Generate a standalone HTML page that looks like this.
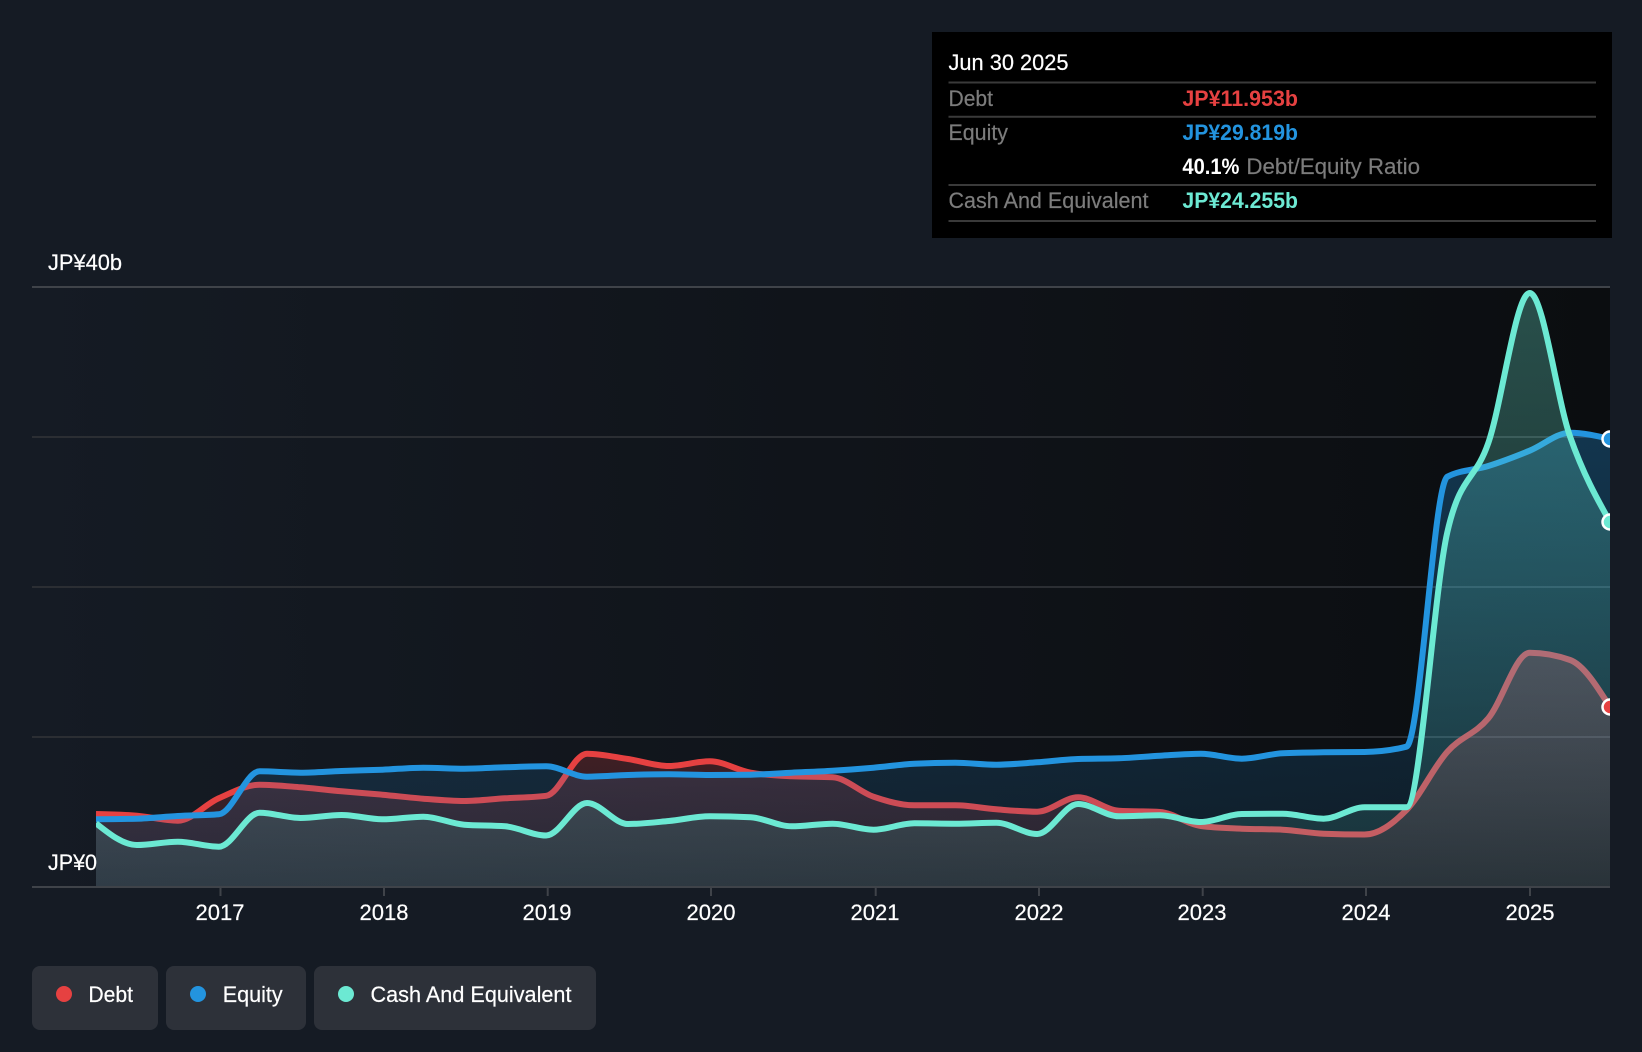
<!DOCTYPE html>
<html><head><meta charset="utf-8"><title>Debt to Equity History</title>
<style>
html,body{margin:0;padding:0;background:#151b24;width:1642px;height:1052px;overflow:hidden}
svg{display:block}
text{font-family:"Liberation Sans",Arial,sans-serif;font-size:22px;fill:#fff;stroke:#fff;stroke-width:.2px}
.b{font-weight:700;stroke:none}
.g{fill:#7c7c7c;stroke:#7c7c7c}
</style></head><body>
<svg width="1642" height="1052" viewBox="0 0 1642 1052" xmlns="http://www.w3.org/2000/svg">
<defs>
<linearGradient id="bg" x1="0" x2="1" y1="0" y2="0"><stop offset="0" stop-color="#151b24"/><stop offset="1" stop-color="#0b0d10"/></linearGradient>
<linearGradient id="fr" x1="0" x2="0" y1="0" y2="1"><stop offset="0" stop-color="#e64141" stop-opacity=".3"/><stop offset="1" stop-color="#e64141" stop-opacity=".1"/></linearGradient>
<linearGradient id="fb" x1="0" x2="0" y1="0" y2="1"><stop offset="0" stop-color="#2394df" stop-opacity=".3"/><stop offset="1" stop-color="#2394df" stop-opacity=".09"/></linearGradient>
<linearGradient id="ft" x1="0" x2="0" y1="0" y2="1"><stop offset="0" stop-color="#6ce9d3" stop-opacity=".3"/><stop offset="1" stop-color="#6ce9d3" stop-opacity=".1"/></linearGradient>
<clipPath id="pc"><rect x="96" y="280" width="1514" height="607"/></clipPath>
</defs>
<rect width="1642" height="1052" fill="#151b24"/>
<rect x="32" y="287" width="1578" height="600" fill="url(#bg)"/>
<g stroke-width="2">
<line x1="32" x2="1610" y1="287" y2="287" stroke="#3f4349"/>
<line x1="32" x2="1610" y1="437" y2="437" stroke="#2b2e33"/>
<line x1="32" x2="1610" y1="587" y2="587" stroke="#2b2e33"/>
<line x1="32" x2="1610" y1="737" y2="737" stroke="#2b2e33"/>
</g>
<g clip-path="url(#pc)">
<path id="ar" fill="url(#fr)"/><path id="lr" fill="none" stroke="#e64141" stroke-width="6"/>
<path id="ab" fill="url(#fb)"/><path id="lb" fill="none" stroke="#2394df" stroke-width="6"/>
<path id="at" fill="url(#ft)"/><path id="lt" fill="none" stroke="#6ce9d3" stroke-width="6"/>
</g>
<line x1="32" x2="1610" y1="887" y2="887" stroke="#3f4349" stroke-width="2"/>
<g stroke="#3f4349" stroke-width="2">
<line x1="220.5" x2="220.5" y1="887" y2="896"/><line x1="384" x2="384" y1="887" y2="896"/><line x1="547.7" x2="547.7" y1="887" y2="896"/><line x1="711" x2="711" y1="887" y2="896"/><line x1="875.7" x2="875.7" y1="887" y2="896"/><line x1="1039" x2="1039" y1="887" y2="896"/><line x1="1202.7" x2="1202.7" y1="887" y2="896"/><line x1="1366" x2="1366" y1="887" y2="896"/><line x1="1530" x2="1530" y1="887" y2="896"/>
</g>
<svg x="0" y="0" width="1610" height="1052">
<circle cx="1610" cy="707" r="7.5" fill="#e64141" stroke="#fff" stroke-width="2.5"/>
<circle cx="1610" cy="439" r="7.5" fill="#2394df" stroke="#fff" stroke-width="2.5"/>
<circle cx="1610" cy="522" r="7.5" fill="#6ce9d3" stroke="#fff" stroke-width="2.5"/>
</svg>
<text x="48" y="270" textLength="74" lengthAdjust="spacingAndGlyphs">JP¥40b</text>
<text x="48" y="870" textLength="49" lengthAdjust="spacingAndGlyphs">JP¥0</text>
<g text-anchor="middle">
<text x="220" y="920">2017</text><text x="384" y="920">2018</text><text x="547" y="920">2019</text><text x="711" y="920">2020</text><text x="875" y="920">2021</text><text x="1039" y="920">2022</text><text x="1202" y="920">2023</text><text x="1366" y="920">2024</text><text x="1530" y="920">2025</text>
</g>
<rect x="932" y="32" width="680" height="206" fill="#000"/>
<g stroke="#3a3a3a" stroke-width="2">
<line x1="948.5" x2="1596" y1="82.5" y2="82.5"/><line x1="948.5" x2="1596" y1="116.7" y2="116.7"/><line x1="948.5" x2="1596" y1="185" y2="185"/><line x1="948.5" x2="1596" y1="221" y2="221"/>
</g>
<text x="948.5" y="70" textLength="120" lengthAdjust="spacingAndGlyphs">Jun 30 2025</text>
<text class="g" x="948.5" y="106" textLength="44.5" lengthAdjust="spacingAndGlyphs">Debt</text>
<text class="g" x="948.5" y="140" textLength="59.5" lengthAdjust="spacingAndGlyphs">Equity</text>
<text class="g" x="948.5" y="208" textLength="200" lengthAdjust="spacingAndGlyphs">Cash And Equivalent</text>
<text class="b" x="1182.4" y="106" textLength="115.6" lengthAdjust="spacingAndGlyphs" style="fill:#e64141">JP¥11.953b</text>
<text class="b" x="1182.4" y="140" textLength="115.6" lengthAdjust="spacingAndGlyphs" style="fill:#2394df">JP¥29.819b</text>
<text class="b" x="1182.4" y="174" textLength="57" lengthAdjust="spacingAndGlyphs">40.1%</text>
<text class="g" x="1246.4" y="174" textLength="173.6" lengthAdjust="spacingAndGlyphs">Debt/Equity Ratio</text>
<text class="b" x="1182.4" y="208" textLength="115.6" lengthAdjust="spacingAndGlyphs" style="fill:#6ce9d3">JP¥24.255b</text>
<rect x="32" y="966" width="126" height="64" rx="8" fill="#2d3139"/>
<rect x="166" y="966" width="140" height="64" rx="8" fill="#2d3139"/>
<rect x="314" y="966" width="282" height="64" rx="8" fill="#2d3139"/>
<circle cx="64" cy="994" r="8" fill="#e64141"/>
<circle cx="198" cy="994" r="8" fill="#2394df"/>
<circle cx="346" cy="994" r="8" fill="#6ce9d3"/>
<text x="88.4" y="1002" textLength="44.6" lengthAdjust="spacingAndGlyphs">Debt</text>
<text x="222.8" y="1002" textLength="59.8" lengthAdjust="spacingAndGlyphs">Equity</text>
<text x="370.5" y="1002" textLength="201" lengthAdjust="spacingAndGlyphs">Cash And Equivalent</text>
</svg>
<script>
var R=[814,815.7,820.7,798.3,784.7,787.3,791.3,794.7,798.7,801,798.3,795.8,753.7,759,766,761.3,772.7,776.3,777.3,796.7,805.3,805.3,809.3,811.7,797.3,810.7,812,826,828.7,829.7,833.7,834.5,810,751.7,718.3,652.7,660,707];
var B=[819.3,818.7,816,814.3,771.3,772.7,771,769.7,767.7,768.7,767.3,766.3,776.7,775,774.3,775,774.7,772.7,770.7,767.7,763.7,762.7,764.7,762.3,759,758.3,755.7,753.7,758.7,753.3,752.3,752,746.7,476.7,466,450.7,432.7,439];
var T=[823.3,845,841.7,846.7,812.7,818,815,819.3,816.7,824.7,826.3,835.5,803,824,821,816.3,817.3,826.3,823.7,829.7,823.3,823.7,822.7,834,804,816.3,815.3,822,814,813.7,818.7,807.3,807.3,532,443,293,436.7,522];
function X(n){var v=96+40.92*n;if(n>=32)v+=(n===37?0:(n===35?1.5:1));return v}
function P(Y){
 var n=Y.length,i,d=[],m=[],x=Y.map(function(_,k){return X(k)});
 for(i=0;i<n-1;i++)d[i]=(Y[i+1]-Y[i])/(x[i+1]-x[i]);
 for(i=1;i<n-1;i++){
  var h0=x[i]-x[i-1],h1=x[i+1]-x[i],s0=d[i-1],s1=d[i],p=(s0*h1+s1*h0)/(h0+h1);
  m[i]=s0*s1<=0?0:((s0<0?-1:1))*Math.min(Math.abs(s0),Math.abs(s1),.5*Math.abs(p))*2;
 }
 m[0]=(3*d[0]-m[1])/2;m[n-1]=(3*d[n-2]-m[n-2])/2;
 var s="M"+x[0]+","+Y[0];
 for(i=0;i<n-1;i++){var h=(x[i+1]-x[i])/3;
  s+="C"+(x[i]+h).toFixed(2)+","+(Y[i]+m[i]*h).toFixed(2)+" "+(x[i+1]-h).toFixed(2)+","+(Y[i+1]-m[i+1]*h).toFixed(2)+" "+x[i+1].toFixed(2)+","+Y[i+1];}
 return s;
}
function S(a,l,Y){var p=P(Y);document.getElementById(l).setAttribute("d",p);
 document.getElementById(a).setAttribute("d",p+"L"+X(Y.length-1)+",887L"+X(0)+",887Z");}
S("ar","lr",R);S("ab","lb",B);S("at","lt",T);
</script>
</body></html>
